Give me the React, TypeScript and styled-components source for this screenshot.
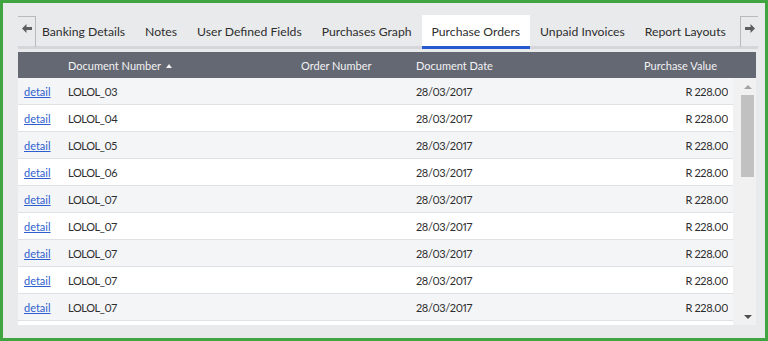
import styled, { createGlobalStyle } from 'styled-components';

const GlobalStyle = createGlobalStyle`
  html, body {
    margin: 0;
    padding: 0;
    background: #e9eaec;
  }
  * {
    box-sizing: border-box;
  }
`;

const Frame = styled.div`
  width: 768px;
  height: 341px;
  border: 3px solid #40a440;
  background: #e9eaec;
  padding: 12px 7px 12px 15px;
  font-family: Lato, 'Open Sans', sans-serif;
  font-size: 11px;
  font-variant-numeric: proportional-nums;
  color: #333;
  display: flex;
  flex-direction: column;
  overflow: hidden;
`;

const TabBar = styled.div`
  display: flex;
  height: 34px;
  box-shadow: inset 0 -3px 0 #d5d6d9;
`;

const ArrowButton = styled.div<{ side: 'left' | 'right' }>`
  flex: none;
  width: 18px;
  height: 31px;
  margin-top: 1px;
  border-top: 1px solid #b9babc;
  ${p =>
    p.side === 'left'
      ? 'border-right: 1px solid #b9babc;'
      : 'border-left: 1px solid #b9babc;'}
  display: flex;
  align-items: flex-start;
  justify-content: center;
  padding-top: 7px;
  color: #5e5e5e;
`;

const TabList = styled.div`
  flex: 1;
  display: flex;
  overflow: hidden;
`;

const Tab = styled.div<{ active?: boolean }>`
  flex: none;
  height: 34px;
  padding: 1px 10px 0;
  display: flex;
  align-items: center;
  white-space: nowrap;
  font-size: 12.2px;
  color: #2e2e2e;
  background: ${p => (p.active ? '#fff' : 'transparent')};
  border-bottom: 3px solid ${p => (p.active ? '#2459cf' : 'transparent')};

  &:first-child {
    padding-left: 6px;
  }
`;

const Table = styled.div`
  margin-top: 3px;
  margin-right: 2px;
  flex: 1;
  display: flex;
  flex-direction: column;
  min-height: 0;
`;

const HeaderRow = styled.div`
  height: 26px;
  background: #646873;
  color: #f3f3f3;
  display: grid;
  grid-template-columns: 44px 233px 115px 1fr 140px;
  align-items: center;
  padding-right: 39px;
`;

const Cell = styled.div<{ right?: boolean }>`
  padding-left: ${p => (p.right ? '0' : '6px')};
  text-align: ${p => (p.right ? 'right' : 'left')};
  white-space: nowrap;
  overflow: hidden;
`;

const DataCell = styled(Cell)`
  letter-spacing: -0.4px;
  color: #2e2e2e;
`;

const SortUp = styled.span`
  display: inline-block;
  width: 0;
  height: 0;
  margin-left: 5px;
  vertical-align: 2px;
  border-left: 3.5px solid transparent;
  border-right: 3.5px solid transparent;
  border-bottom: 4px solid #f3f3f3;
`;

const Body = styled.div`
  height: 247px;
  display: flex;
`;

const Rows = styled.div`
  flex: 1;
  overflow: hidden;
`;

const Row = styled.div<{ odd: boolean }>`
  height: 27px;
  background: ${p => (p.odd ? '#f4f5f7' : '#fff')};
  border-bottom: 1px solid #e0e1e4;
  display: grid;
  grid-template-columns: 44px 233px 115px 1fr 140px;
  align-items: center;
  padding-right: 5px;
`;

const DetailLink = styled.a`
  color: #2f5fcf;
  text-decoration: underline;
  cursor: pointer;
`;

const Scrollbar = styled.div`
  flex: none;
  width: 23px;
  background: #f1f1f1;
  padding-left: 6px;
  display: flex;
  flex-direction: column;
`;

const ScrollButton = styled.div`
  height: 17px;
  display: flex;
  align-items: center;
  justify-content: center;
`;

const Tri = styled.span<{ dir: 'up' | 'down'; dim?: boolean }>`
  width: 0;
  height: 0;
  border-left: 4px solid transparent;
  border-right: 4px solid transparent;
  ${p =>
    p.dir === 'up'
      ? `border-bottom: 4px solid ${p.dim ? '#a3a3a3' : '#505050'};`
      : `border-top: 4px solid ${p.dim ? '#a3a3a3' : '#505050'};`}
`;

const Thumb = styled.div`
  height: 82px;
  margin: 0 2px;
  background: #c1c1c1;
`;

const Spacer = styled.div`
  flex: 1;
`;

const Arrow = ({ dir }: { dir: 'left' | 'right' }) => (
  <svg
    width="10"
    height="9"
    viewBox="0 0 10 9"
    style={{ transform: dir === 'right' ? 'scaleX(-1)' : undefined }}
  >
    <path d="M0 4.5 L4.5 0 L4.5 3 L10 3 L10 6 L4.5 6 L4.5 9 Z" fill="currentColor" />
  </svg>
);

const tabs = [
  'Banking Details',
  'Notes',
  'User Defined Fields',
  'Purchases Graph',
  'Purchase Orders',
  'Unpaid Invoices',
  'Report Layouts',
];

const orders = [
  'LOLOL_03',
  'LOLOL_04',
  'LOLOL_05',
  'LOLOL_06',
  'LOLOL_07',
  'LOLOL_07',
  'LOLOL_07',
  'LOLOL_07',
  'LOLOL_07',
];

export default function App() {
  return (
    <>
      <GlobalStyle />
      <Frame>
        <TabBar>
          <ArrowButton side="left">
            <Arrow dir="left" />
          </ArrowButton>
          <TabList>
            {tabs.map(t => (
              <Tab key={t} active={t === 'Purchase Orders'}>
                {t}
              </Tab>
            ))}
          </TabList>
          <ArrowButton side="right">
            <Arrow dir="right" />
          </ArrowButton>
        </TabBar>
        <Table>
          <HeaderRow>
            <Cell />
            <Cell>
              Document Number
              <SortUp />
            </Cell>
            <Cell>Order Number</Cell>
            <Cell>Document Date</Cell>
            <Cell right>Purchase Value</Cell>
          </HeaderRow>
          <Body>
            <Rows>
              {orders.map((o, i) => (
                <Row key={i} odd={i % 2 === 0}>
                  <Cell>
                    <DetailLink>detail</DetailLink>
                  </Cell>
                  <DataCell>{o}</DataCell>
                  <Cell />
                  <DataCell>28/03/2017</DataCell>
                  <DataCell right>R 228.00</DataCell>
                </Row>
              ))}
              <Row odd={false} />
            </Rows>
            <Scrollbar>
              <ScrollButton>
                <Tri dir="up" dim />
              </ScrollButton>
              <Thumb />
              <Spacer />
              <ScrollButton>
                <Tri dir="down" />
              </ScrollButton>
            </Scrollbar>
          </Body>
        </Table>
      </Frame>
    </>
  );
}
